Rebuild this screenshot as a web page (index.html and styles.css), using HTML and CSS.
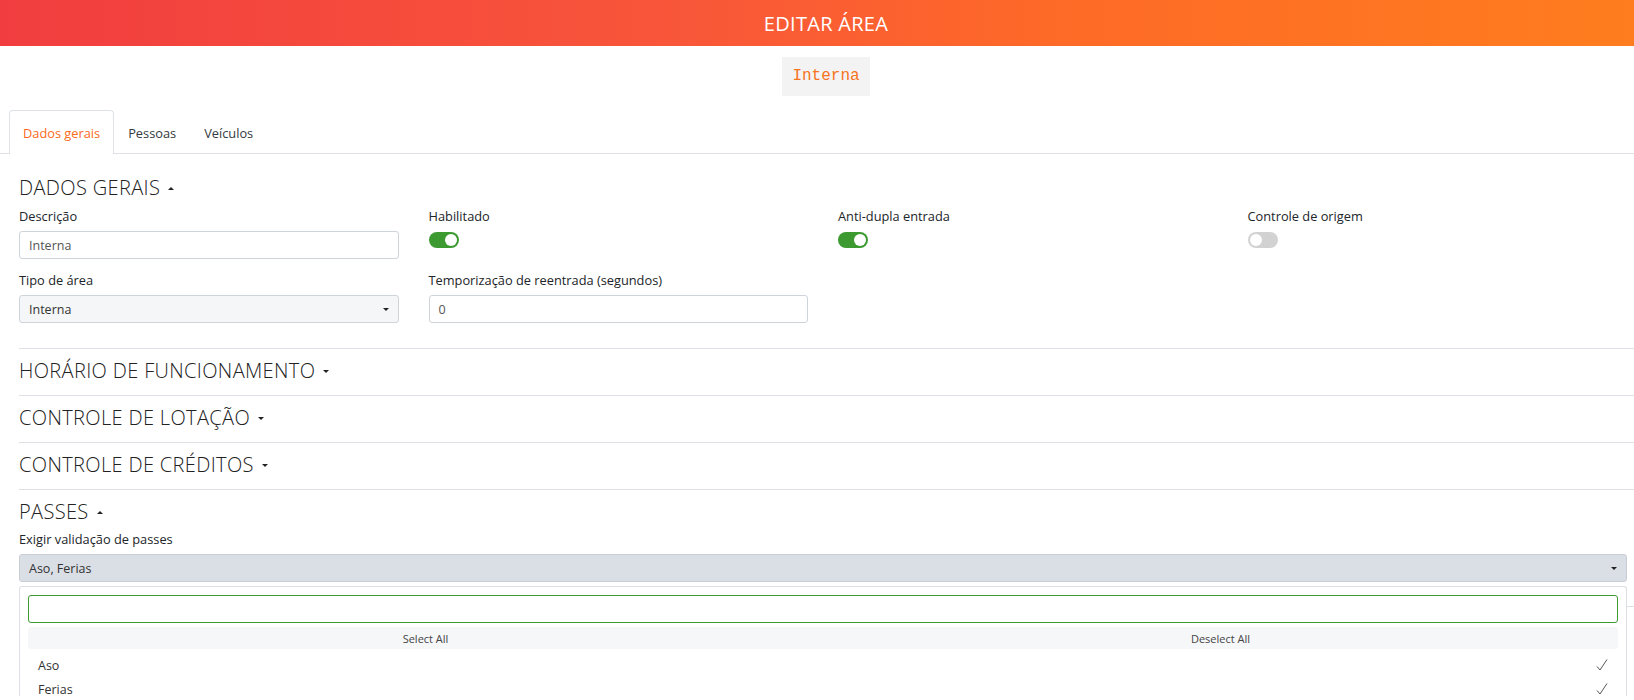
FILE: index.html
```html
<!DOCTYPE html>
<html lang="pt">
<head>
<meta charset="utf-8">
<title>Editar Área</title>
<link rel="stylesheet" href="styles.css">
</head>
<body>
<header class="topbar">EDITAR ÁREA</header>

<div class="code-wrap"><code class="code-box">Interna</code></div>

<nav class="tabs">
  <a class="tab active">Dados gerais</a>
  <a class="tab">Pessoas</a>
  <a class="tab">Veículos</a>
</nav>

<main class="content">
  <section class="section first">
    <h2 class="sec-title">DADOS GERAIS <span class="caret up"></span></h2>
    <div class="grid">
      <div class="field">
        <label class="lbl">Descrição</label>
        <div class="input">Interna</div>
      </div>
      <div class="field">
        <label class="lbl">Habilitado</label>
        <span class="toggle on"><span class="knob"></span></span>
      </div>
      <div class="field">
        <label class="lbl">Anti-dupla entrada</label>
        <span class="toggle on"><span class="knob"></span></span>
      </div>
      <div class="field">
        <label class="lbl">Controle de origem</label>
        <span class="toggle"><span class="knob"></span></span>
      </div>
      <div class="field row2">
        <label class="lbl">Tipo de área</label>
        <div class="input select">Interna <span class="caret down small"></span></div>
      </div>
      <div class="field row2">
        <label class="lbl">Temporização de reentrada (segundos)</label>
        <div class="input">0</div>
      </div>
    </div>
  </section>

  <section class="section collapsed">
    <h2 class="sec-title">HORÁRIO DE FUNCIONAMENTO <span class="caret down"></span></h2>
  </section>
  <section class="section collapsed">
    <h2 class="sec-title">CONTROLE DE LOTAÇÃO <span class="caret down"></span></h2>
  </section>
  <section class="section collapsed">
    <h2 class="sec-title">CONTROLE DE CRÉDITOS <span class="caret down"></span></h2>
  </section>

  <section class="section passes">
    <h2 class="sec-title">PASSES <span class="caret up"></span></h2>
    <label class="lbl">Exigir validação de passes</label>
    <div class="ms-wrap">
      <div class="input select ms">Aso, Ferias <span class="caret down small"></span></div>
      <div class="ms-menu">
        <div class="ms-search"></div>
        <div class="ms-actions">
          <span>Select All</span>
          <span>Deselect All</span>
        </div>
        <ul class="ms-list">
          <li>Aso <svg class="check" width="12" height="12" viewBox="0 0 12 12"><path d="M1 7.5 L4 11 L11 0.5" fill="none" stroke="#555" stroke-width="1"/></svg></li>
          <li>Ferias <svg class="check" width="12" height="12" viewBox="0 0 12 12"><path d="M1 7.5 L4 11 L11 0.5" fill="none" stroke="#555" stroke-width="1"/></svg></li>
        </ul>
      </div>
    </div>
    <hr class="under-line">
    <div class="under-block"></div>
  </section>
</main>
</body>
</html>
```

FILE: styles.css
```css
* { box-sizing: border-box; }

html, body {
  margin: 0;
  padding: 0;
  background: #fff;
  font-family: "Open Sans", "Noto Sans", sans-serif;
  color: #212529;
  overflow: hidden;
}

.topbar {
  height: 46px;
  display: flex;
  align-items: center;
  justify-content: center;
  padding-left: 18px;
  background: linear-gradient(90deg, #f13d3f 0%, #f8553a 40%, #fe6a27 65%, #ff7d1e 100%);
  color: #fff;
  font-size: 20px;
  font-weight: 400;
  letter-spacing: 0.3px;
}

.code-wrap {
  display: flex;
  justify-content: center;
  padding-top: 11px;
  padding-left: 18px;
}

.code-box {
  display: block;
  height: 39px;
  line-height: 39px;
  padding: 0 10px;
  background: #f3f3f3;
  color: #f7731c;
  font-family: "Liberation Mono", "DejaVu Sans Mono", monospace;
  font-size: 16px;
}

.tabs {
  display: flex;
  margin-top: 14px;
  padding-left: 9px;
  height: 44px;
  border-bottom: 1px solid #dee2e6;
}

.tab {
  display: flex;
  align-items: center;
  white-space: nowrap;
  height: 44px;
  padding: 0 13px;
  font-size: 12.8px;
  color: #343a40;
  border: 1px solid transparent;
  border-bottom: none;
  border-radius: 4px 4px 0 0;
}

.tab.active {
  color: #fd6a1a;
  border-color: #dee2e6;
  background: #fff;
  height: 44px;
  margin-bottom: -1px;
}

.content {
  padding: 0 0 0 19px;
}

.section {
  border-top: 1px solid #dee2e6;
  padding: 10px 0 12px;
}

.section.first {
  border-top: none;
  padding: 22px 7px 25px 0;
}

.section.passes {
  padding-right: 0;
}

.sec-title {
  margin: 0;
  height: 24px;
  line-height: 24px;
  font-size: 20px;
  font-weight: 300;
  letter-spacing: 0.35px;
  color: #222;
  display: flex;
  align-items: center;
  gap: 8px;
}

.caret {
  display: inline-block;
  width: 0;
  height: 0;
  border-left: 3px solid transparent;
  border-right: 3px solid transparent;
}
.caret.up { border-bottom: 3px solid #222; }
.caret.down { border-top: 3px solid #222; }

.grid {
  display: grid;
  grid-template-columns: repeat(4, 1fr);
  column-gap: 30px;
  margin-top: 8px;
}

.field { display: flex; flex-direction: column; align-items: flex-start; }
.field.row2 { margin-top: 13px; }

.lbl {
  display: block;
  height: 16px;
  line-height: 16px;
  font-size: 12.8px;
  font-weight: 500;
  color: #212529;
  margin-bottom: 7px;
}

.input {
  width: 100%;
  height: 28px;
  border: 1px solid #ced4da;
  border-radius: 3px;
  padding: 0 9px;
  display: flex;
  align-items: center;
  font-size: 12.5px;
  color: #555;
}

.input.select {
  background: #f5f6f8;
  color: #333;
  justify-content: space-between;
}

.toggle {
  position: relative;
  display: block;
  width: 30px;
  height: 16px;
  border-radius: 8px;
  background: #d2d2d2;
  margin-top: 1px;
}
.toggle.on { background: #3c9a31; }
.toggle .knob {
  position: absolute;
  top: 2px;
  left: 2px;
  width: 12px;
  height: 12px;
  border-radius: 50%;
  background: #fff;
}
.toggle.on .knob { left: 16px; }

.passes .sec-title { margin-bottom: 7px; }
.passes .lbl { margin-bottom: 7px; }

.ms-wrap {
  position: relative;
  margin-right: 7px;
}

.input.ms {
  background: #dadee5;
  border-color: #c9ced6;
  color: #333;
  padding-right: 9px;
}

.ms-menu {
  position: absolute;
  z-index: 5;
  top: 32px;
  left: 0;
  right: 0;
  height: 118px;
  overflow: hidden;
  background: #fff;
  border: 1px solid #dcdfe3;
  border-bottom: none;
  border-radius: 3px 3px 0 0;
  padding: 8px 8px 0;
}

.ms-search {
  height: 28px;
  border: 1px solid #3c9a31;
  border-radius: 3px;
}

.ms-actions {
  display: grid;
  grid-template-columns: 1fr 1fr;
  margin-top: 4px;
  height: 22px;
  background: #f6f7f9;
  border-radius: 3px;
  font-size: 11px;
  color: #444;
}
.ms-actions span {
  display: flex;
  align-items: center;
  justify-content: center;
}

.ms-list {
  list-style: none;
  margin: 4px 0 0;
  padding: 0;
}
.ms-list li {
  height: 24px;
  display: flex;
  align-items: center;
  justify-content: space-between;
  padding: 0 10px 0 10px;
  font-size: 12.5px;
  color: #333;
}
.check {
  display: block;
}

.under-line {
  margin: 24px 0 0;
  border: 0;
  border-top: 1px solid #dee2e6;
}
.under-block {
  margin-top: 37px;
  height: 40px;
  border-left: 2px solid #e2631f;
}
```
